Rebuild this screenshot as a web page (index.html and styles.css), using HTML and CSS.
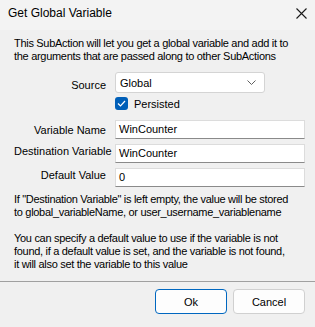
FILE: index.html
```html
<!DOCTYPE html>
<html lang="en">

<head>
    <meta charset="UTF-8">
    <title>Get Global Variable</title>
    <link rel="stylesheet" href="styles.css">
</head>

<body>
    <div class="dialog">
        <div class="titlebar">
            <span class="title">Get Global Variable</span>
            <svg class="close" width="11" height="11" viewBox="0 0 11 11">
                <path d="M0.5 0.5 L10.5 10.5 M10.5 0.5 L0.5 10.5" stroke="#1a1a1a" stroke-width="1.1" fill="none"/>
            </svg>
        </div>
        <div class="content">
            <p class="intro">This SubAction will let you get a global variable and add it to<br>the arguments that are passed along to other SubActions</p>
            <div class="form">
                <label class="lbl">Source</label>
                <div class="combo">
                    <span>Global</span>
                    <svg width="9" height="5" viewBox="0 0 9 5">
                        <path d="M0.5 0.5 L4.5 4.5 L8.5 0.5" stroke="#606060" stroke-width="1" fill="none"/>
                    </svg>
                </div>
                <span></span>
                <div class="check">
                    <span class="box">
                        <svg width="9" height="7" viewBox="0 0 9 7">
                            <path d="M1 3.5 L3.5 6 L8 1" stroke="#fff" stroke-width="1.2" fill="none"/>
                        </svg>
                    </span>
                    <span>Persisted</span>
                </div>
                <label class="lbl first">Variable Name</label>
                <div class="input first">WinCounter</div>
                <label class="lbl">Destination Variable</label>
                <div class="input">WinCounter</div>
                <label class="lbl">Default Value</label>
                <div class="input">0</div>
            </div>
            <p class="note">If "Destination Variable" is left empty, the value will be stored<br>to global_variableName, or user_username_variablename</p>
            <p class="note">You can specify a default value to use if the variable is not<br>found, if a default value is set, and the variable is not found,<br>it will also set the variable to this value</p>
        </div>
        <div class="footer">
            <button class="btn primary">Ok</button>
            <button class="btn">Cancel</button>
        </div>
    </div>
</body>

</html>
```

FILE: styles.css
```css
* {
    margin: 0;
    padding: 0;
    box-sizing: border-box;
}

body {
    background: #f0f0f0;
    font-family: "Liberation Sans", Arial, sans-serif;
    font-size: 11px;
    color: #000;
}

.dialog {
    width: 315px;
    height: 327px;
    display: flex;
    flex-direction: column;
}

.titlebar {
    height: 30px;
    background: #f3f3f3;
    display: flex;
    align-items: center;
    justify-content: space-between;
    padding: 0 8px 4px 8px;
    font-size: 12px;
}

.content {
    padding: 7px 2px 0 14px;
}

.intro,
.note {
    line-height: 13px;
    white-space: nowrap;
    letter-spacing: -0.3px;
}

.note {
    margin-bottom: 13px;
}

.note:last-child {
    margin-bottom: 0;
}

.form {
    display: grid;
    grid-template-columns: 92px 190px;
    column-gap: 9px;
    align-items: center;
    margin: 9px 0 6px 0;
}

.lbl {
    text-align: right;
    white-space: nowrap;
}

.combo {
    width: 150px;
    height: 21px;
    background: #fff;
    border: 1px solid #d4d4d4;
    border-radius: 3px;
    display: flex;
    align-items: center;
    justify-content: space-between;
    padding: 0 8px 0 4px;
    margin-bottom: 4px;
}

.check {
    display: flex;
    align-items: center;
    gap: 6px;
    height: 13px;
    margin-bottom: 10px;
}

.check .box {
    width: 13px;
    height: 13px;
    border-radius: 3px;
    background: #005fb8;
    display: flex;
    align-items: center;
    justify-content: center;
}

.input {
    height: 19px;
    background: #fff;
    border: 1px solid #dcdcdc;
    border-bottom-color: #8a8a8a;
    padding: 0 3px;
    line-height: 17px;
    margin-top: 5px;
}

.input.first {
    margin-top: 0;
}

.footer {
    margin-top: auto;
    border-top: 1px solid #a0a0a0;
    height: 46px;
    display: flex;
    justify-content: flex-end;
    gap: 6px;
    padding: 7px 10px 0 0;
}

.btn {
    width: 72px;
    height: 25px;
    border: 1px solid #d0d0d0;
    border-radius: 4px;
    background: #fdfdfd;
    font-family: "Liberation Sans", Arial, sans-serif;
    font-size: 11px;
    color: #000;
}

.btn.primary {
    border-color: #0067c0;
}
```
